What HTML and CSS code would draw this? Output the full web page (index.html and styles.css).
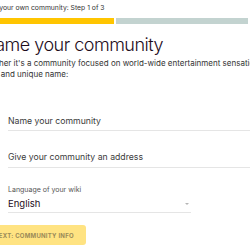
FILE: index.html
```html
<!DOCTYPE html>
<html lang="en">
<head>
    <meta charset="UTF-8">
    <meta name="viewport" content="width=device-width, initial-scale=1.0">
    <title>Create a community</title>
    <link rel="stylesheet" href="styles.css">
</head>
<body>
    <div class="wizard">
        <div class="step-label">Create your own community: Step 1 of 3</div>
        <div class="progress">
            <span class="progress-step done"></span>
            <span class="progress-step"></span>
            <span class="progress-step"></span>
        </div>

        <h1>Name your community</h1>
        <p class="intro">Whether it's a community focused on world-wide entertainment sensations or niche hobbies, give it a<br>short and unique name:</p>

        <div class="fields">
            <div class="field">
                <input type="text" placeholder="Name your community" aria-label="Community name">
            </div>
            <div class="field">
                <input type="text" placeholder="Give your community an address" aria-label="Community address">
            </div>
            <div class="field field-select">
                <label for="langSelect">Language of your wiki</label>
                <div class="select-wrap">
                    <select id="langSelect">
                        <option>English</option>
                    </select>
                    <span class="arrow"></span>
                </div>
            </div>
        </div>

        <button class="next-btn" disabled>Next: Community info</button>
    </div>
</body>
</html>
```

FILE: styles.css
```css
/* General */
body {
    margin: 0;
    background: #fff;
    font-family: Inter, "Noto Sans", sans-serif;
    color: #1e0c1b;
    overflow: hidden;
}

.wizard {
    margin-left: -18px;
    width: 420px;
    padding-top: 3px;
}

/* Step header */
.step-label {
    font-size: 6.8px;
    line-height: 9px;
    color: #333;
    margin-left: -6px;
    white-space: nowrap;
}

.progress {
    display: flex;
    gap: 2px;
    margin-top: 6px;
}

.progress-step {
    width: 132px;
    height: 6px;
    background: #c3d3d0;
}

.progress-step.done {
    background: #ffc500;
}

/* Title */
h1 {
    font-size: 18px;
    font-weight: 300;
    letter-spacing: -0.5px;
    line-height: 24px;
    margin: 9px 0 0;
    color: #1e0c1b;
    white-space: nowrap;
}

.intro {
    font-size: 8px;
    line-height: 11px;
    margin: 1px 0 0 -3px;
    color: #333;
    white-space: nowrap;
}

/* Fields */
.fields {
    padding-left: 26px;
}

.field input {
    display: block;
    box-sizing: content-box;
    width: 260px;
    height: 12px;
    border: none;
    border-bottom: 1px solid #e5e5e5;
    padding: 0 0 3px;
    margin: 35px 0 0;
    font-family: inherit;
    font-size: 8.7px;
    line-height: 12px;
    color: #333;
    outline: none;
}

.field + .field input {
    margin-top: 20px;
    padding-bottom: 4px;
}

.field input::placeholder {
    color: #3a3a3a;
}

.field-select {
    margin-top: 17px;
    width: 183px;
}

.field-select label {
    display: block;
    font-size: 7px;
    line-height: 9px;
    color: #555;
}

.select-wrap {
    position: relative;
    border-bottom: 1px solid #e5e5e5;
    margin-top: 3px;
    padding-bottom: 2px;
}

.select-wrap select {
    display: block;
    appearance: none;
    border: none;
    background: none;
    height: 13px;
    font-family: inherit;
    font-size: 9.5px;
    line-height: 13px;
    color: #1e0c1b;
    padding: 0;
    width: 100%;
    outline: none;
}

.arrow {
    position: absolute;
    right: 2px;
    top: 6px;
    border-left: 2px solid transparent;
    border-right: 2px solid transparent;
    border-top: 2.5px solid #b5b5b5;
}

/* Button */
.next-btn {
    display: block;
    margin-top: 12px;
    background: #ffe382;
    color: #9a8a58;
    border: none;
    border-radius: 3px;
    padding: 0 12px;
    height: 20px;
    font-family: inherit;
    font-size: 6px;
    font-weight: 700;
    letter-spacing: 0.25px;
    text-transform: uppercase;
}
```
